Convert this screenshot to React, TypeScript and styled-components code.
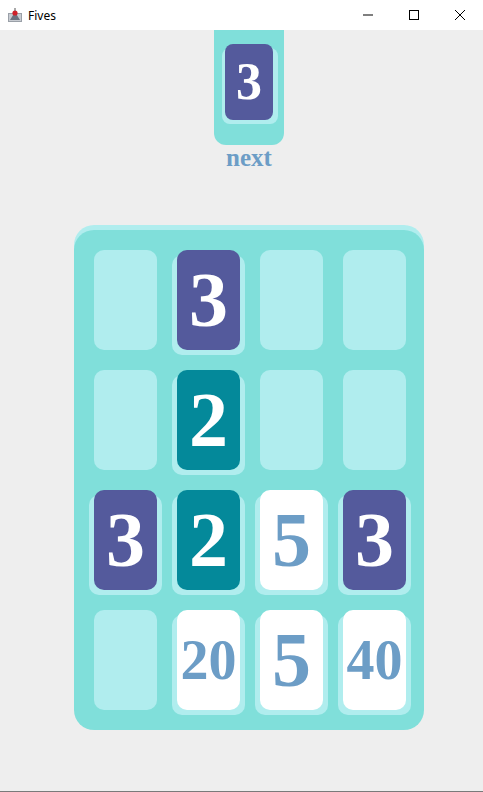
import React from "react";
import styled, { createGlobalStyle } from "styled-components";

const GlobalStyle = createGlobalStyle`
  html, body { margin: 0; padding: 0; background: #eeeeee; }
  body { font-family: "Liberation Sans", Arial, sans-serif; }
`;

const Window = styled.div`
  width: 483px;
  height: 792px;
  display: flex;
  flex-direction: column;
  background: #eeeeee;
  overflow: hidden;
`;

const TitleBar = styled.div`
  height: 30px;
  flex: 0 0 30px;
  background: #ffffff;
  display: flex;
  align-items: center;
`;

const AppIcon = styled.svg`
  margin-left: 7px;
  width: 16px;
  height: 16px;
`;

const Title = styled.div`
  margin-left: 5px;
  font-family: "Noto Sans", "Open Sans", sans-serif;
  font-size: 12px;
  color: #000000;
  flex: 1;
`;

const CtrlButton = styled.div`
  width: 46px;
  height: 30px;
  display: flex;
  align-items: center;
  justify-content: center;
`;

const Content = styled.div`
  flex: 1;
  display: flex;
  flex-direction: column;
  align-items: center;
  padding-left: 15px;
`;

const NextPanel = styled.div`
  width: 70px;
  height: 115px;
  box-sizing: border-box;
  padding-top: 14px;
  background: #80dfda;
  border-radius: 0 0 12px 12px;
  display: flex;
  justify-content: center;
  align-items: flex-start;
`;

const NextLabel = styled.div`
  font-family: "Liberation Serif", "Times New Roman", serif;
  font-weight: bold;
  font-size: 25px;
  line-height: 25px;
  height: 25px;
  color: #6c9dc6;
`;

const Board = styled.div`
  position: relative;
  z-index: 0;
  margin-top: 60px;
  width: 350px;
  height: 500px;
  box-sizing: border-box;
  padding: 20px;
  background: #80dfda;
  border-radius: 20px;
  box-shadow: 0 -5px 0 0 #b0edee;
  display: grid;
  grid-template-columns: repeat(4, 63px);
  grid-template-rows: repeat(4, 100px);
  column-gap: 20px;
  row-gap: 20px;
`;

type Kind = "empty" | "one" | "two" | "white";

const bg: Record<Kind, string> = {
  empty: "#b0edee",
  one: "#545a9c",
  two: "#04899a",
  white: "#ffffff",
};

const Tile = styled.div<{ $kind: Kind; $small?: boolean; $next?: boolean }>`
  width: ${(p) => (p.$next ? 48 : 63)}px;
  height: ${(p) => (p.$next ? 76 : 100)}px;
  border-radius: ${(p) => (p.$next ? 8 : 10)}px;
  background: ${(p) => bg[p.$kind]};
  box-shadow: ${(p) =>
    p.$kind === "empty"
      ? "none"
      : p.$next
      ? "-3px 4px 0 0 #b0edee, 5px 4px 0 0 #b0edee"
      : "-5px 5px 0 0 #b0edee, 5px 5px 0 0 #b0edee"};
  display: flex;
  align-items: center;
  justify-content: center;
  font-family: "Liberation Serif", "Times New Roman", serif;
  font-weight: bold;
  font-size: ${(p) => (p.$next ? 52 : p.$small ? 56 : 78)}px;
  line-height: 1;
  color: ${(p) => (p.$kind === "white" ? "#6c9dc6" : "#ffffff")};
`;

const cells: { kind: Kind; v?: number }[] = [
  { kind: "empty" },
  { kind: "one", v: 3 },
  { kind: "empty" },
  { kind: "empty" },
  { kind: "empty" },
  { kind: "two", v: 2 },
  { kind: "empty" },
  { kind: "empty" },
  { kind: "one", v: 3 },
  { kind: "two", v: 2 },
  { kind: "white", v: 5 },
  { kind: "one", v: 3 },
  { kind: "empty" },
  { kind: "white", v: 20 },
  { kind: "white", v: 5 },
  { kind: "white", v: 40 },
];

const BottomLine = styled.div`
  height: 1px;
  flex: 0 0 1px;
  background: #7a7a7a;
`;

export default function App() {
  return (
    <Window>
      <GlobalStyle />
      <TitleBar>
        <AppIcon viewBox="0 0 16 16">
          <rect x="1" y="6" width="14" height="9" fill="#9aa0a8" />
          <rect x="2" y="7" width="12" height="7" fill="#c8ccd2" />
          <path d="M3 13 L8 5 L13 13 Z" fill="#6b7280" />
          <circle cx="8" cy="6" r="2.6" fill="#d0202a" />
          <rect x="7.5" y="1" width="1" height="3" fill="#555" />
        </AppIcon>
        <Title>Fives</Title>
        <CtrlButton>
          <svg width="10" height="10" viewBox="0 0 10 10">
            <rect x="0" y="4.5" width="10" height="1" fill="#000" />
          </svg>
        </CtrlButton>
        <CtrlButton>
          <svg width="10" height="10" viewBox="0 0 10 10">
            <rect x="0.5" y="0.5" width="9" height="9" fill="none" stroke="#000" strokeWidth="1" />
          </svg>
        </CtrlButton>
        <CtrlButton>
          <svg width="10" height="10" viewBox="0 0 10 10">
            <path d="M0 0 L10 10 M10 0 L0 10" stroke="#000" strokeWidth="1" />
          </svg>
        </CtrlButton>
      </TitleBar>
      <Content>
        <NextPanel>
          <Tile $kind="one" $next>
            3
          </Tile>
        </NextPanel>
        <NextLabel>next</NextLabel>
        <Board>
          {cells.map((c, i) => (
            <Tile key={i} $kind={c.kind} $small={(c.v ?? 0) >= 10}>
              {c.v ?? ""}
            </Tile>
          ))}
        </Board>
      </Content>
      <BottomLine />
    </Window>
  );
}
